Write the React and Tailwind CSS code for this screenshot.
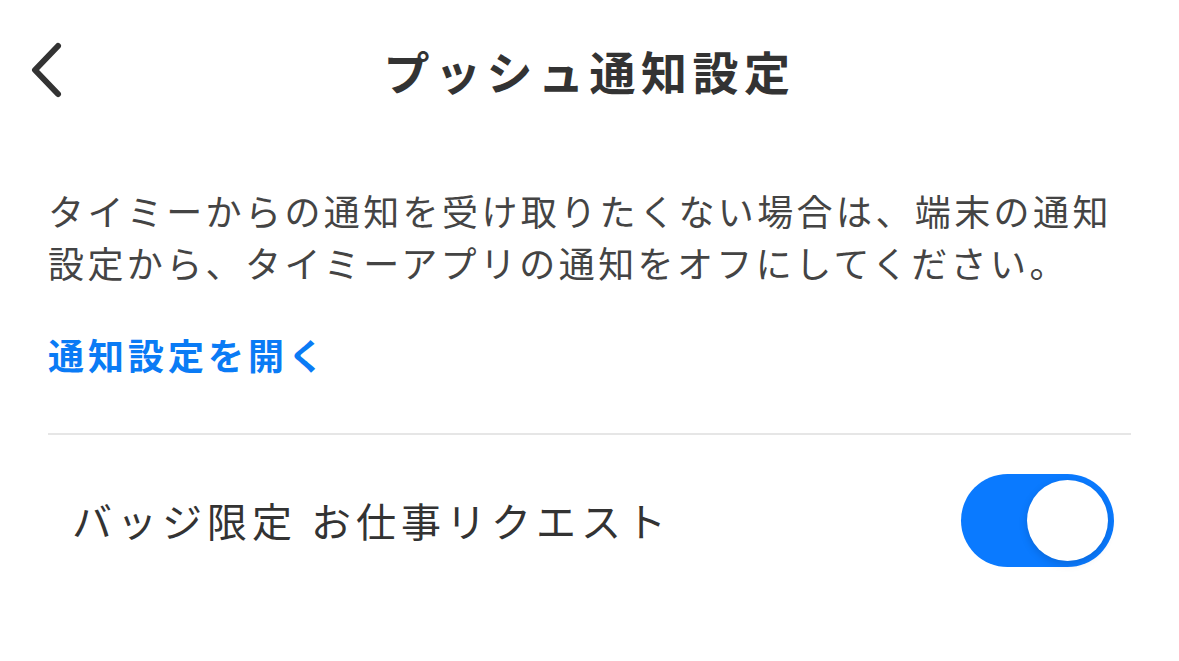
import React, { useState } from "react";

const font = { fontFamily: '"Noto Sans CJK JP", "Noto Sans", sans-serif' };

const Toggle = ({ on, onChange }) => (
  <button
    onClick={() => onChange(!on)}
    className={`relative w-[153px] h-[93px] rounded-full transition-colors ${
      on ? "bg-[#0a7aff]" : "bg-[#e5e5ea]"
    }`}
  >
    <span
      className={`absolute top-[6px] w-[81px] h-[81px] rounded-full bg-white shadow-[0_3px_8px_rgba(0,0,0,0.15)] transition-all ${
        on ? "left-[66px]" : "left-[6px]"
      }`}
    />
  </button>
);

export default function App() {
  const [badgeOnly, setBadgeOnly] = useState(true);

  return (
    <div className="w-[1179px] h-[661px] bg-white text-[#333333]" style={font}>
      {/* header */}
      <div className="relative h-[140px] flex items-center justify-center">
        <button className="absolute left-[24px] top-[40px] w-[44px] h-[60px] flex items-center justify-center">
          <svg width="40" height="60" viewBox="0 0 40 60" fill="none">
            <path
              d="M32 6 L9 30 L32 54"
              stroke="#333333"
              strokeWidth="6"
              strokeLinecap="round"
              strokeLinejoin="round"
            />
          </svg>
        </button>
        <h1 className="text-[46px] font-bold tracking-[5.5px] leading-none">
          プッシュ通知設定
        </h1>
      </div>

      <div className="px-[48px]">
        <p className="mt-[44px] text-[36px] leading-[52px] tracking-[3.4px] text-[#444444]">
          タイミーからの通知を受け取りたくない場合は、端末の通知
          <br />
          設定から、タイミーアプリの通知をオフにしてください。
        </p>

        <a className="block mt-[40px] text-[36px] leading-[52px] font-bold tracking-[4px] text-[#0a7bf5]">
          通知設定を開く
        </a>

        <div className="mt-[53px] h-[2px] bg-[#e6e6e6]" />

        <div className="flex items-center justify-between h-[170px] pl-[24px] pr-[17px]">
          <span className="text-[40px] tracking-[5px]">
            バッジ限定 お仕事リクエスト
          </span>
          <Toggle on={badgeOnly} onChange={setBadgeOnly} />
        </div>
      </div>
    </div>
  );
}
